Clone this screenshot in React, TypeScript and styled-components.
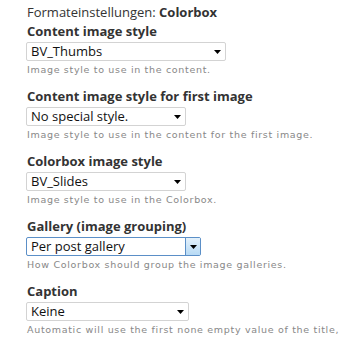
import styled, { createGlobalStyle } from "styled-components"

const GlobalStyle = createGlobalStyle`
    body {
        margin:0;
        background:#fff;
        font-family:"Open Sans", "Noto Sans", sans-serif;
    }
`

const Form = styled.div`
    padding:4px 0 0 26px;
    width:315px;
`
const Title = styled.div`
    font-size:13px;
    line-height:16px;
    color:#333;
    margin-left:1px;
    margin-bottom:3px;
    b {
        font-weight:700;
    }
`
const Item = styled.div`
    margin-bottom:12px;
`
const Label = styled.label`
    display:block;
    font-size:13px;
    font-weight:700;
    line-height:17px;
    color:#333;
    margin-left:1px;
    margin-bottom:2px;
`
const SelectWrap = styled.div<{ $w: number; $focus?: boolean }>`
    position:relative;
    width:${p => p.$w}px;
    height:19px;
    box-sizing:border-box;
    border:1px solid ${p => p.$focus ? "#5b8fc7" : "#d3d3d3"};
    border-radius:2px;
    background:#fff;
`
const Select = styled.select`
    appearance:none;
    border:none;
    outline:none;
    background:transparent;
    display:block;
    width:100%;
    height:17px;
    padding:0 0 1px 4px;
    font-family:"Open Sans", "Noto Sans", sans-serif;
    font-size:13px;
    line-height:15px;
    color:#111;
`
const Arrow = styled.div<{ $focus?: boolean }>`
    position:absolute;
    top:0;
    right:0;
    width:15px;
    height:17px;
    display:flex;
    align-items:center;
    justify-content:center;
    pointer-events:none;
    background:${p => p.$focus ? "linear-gradient(#e4f1fb, #b7daf5)" : "transparent"};
    border-left:${p => p.$focus ? "1px solid #5b8fc7" : "none"};
    box-sizing:border-box;
`
const Desc = styled.div`
    font-family:"DejaVu Sans", Verdana, sans-serif;
    font-size:9.5px;
    letter-spacing:0.68px;
    line-height:12px;
    color:#888;
    margin-top:3px;
    margin-left:1px;
    white-space:nowrap;
`

const fields = [
    { label: "Content image style", value: "BV_Thumbs", w: 200, desc: "Image style to use in the content." },
    { label: "Content image style for first image", value: "No special style.", w: 160, desc: "Image style to use in the content for the first image." },
    { label: "Colorbox image style", value: "BV_Slides", w: 160, desc: "Image style to use in the Colorbox." },
    { label: "Gallery (image grouping)", value: "Per post gallery", w: 175, desc: "How Colorbox should group the image galleries.", focus: true },
    { label: "Caption", value: "Keine", w: 163, desc: "Automatic will use the first none empty value of the title," },
]

export default function App() {
    return (
        <>
            <GlobalStyle />
            <Form>
                <Title>Formateinstellungen: <b>Colorbox</b></Title>
                {fields.map(f => (
                    <Item key={f.label}>
                        <Label>{f.label}</Label>
                        <SelectWrap $w={f.w} $focus={f.focus}>
                            <Select defaultValue={f.value}>
                                <option>{f.value}</option>
                            </Select>
                            <Arrow $focus={f.focus}>
                                <svg width="7" height="4" viewBox="0 0 7 4"><path d="M0 0h7L3.5 4z" fill="#000" /></svg>
                            </Arrow>
                        </SelectWrap>
                        <Desc>{f.desc}</Desc>
                    </Item>
                ))}
            </Form>
        </>
    )
}
